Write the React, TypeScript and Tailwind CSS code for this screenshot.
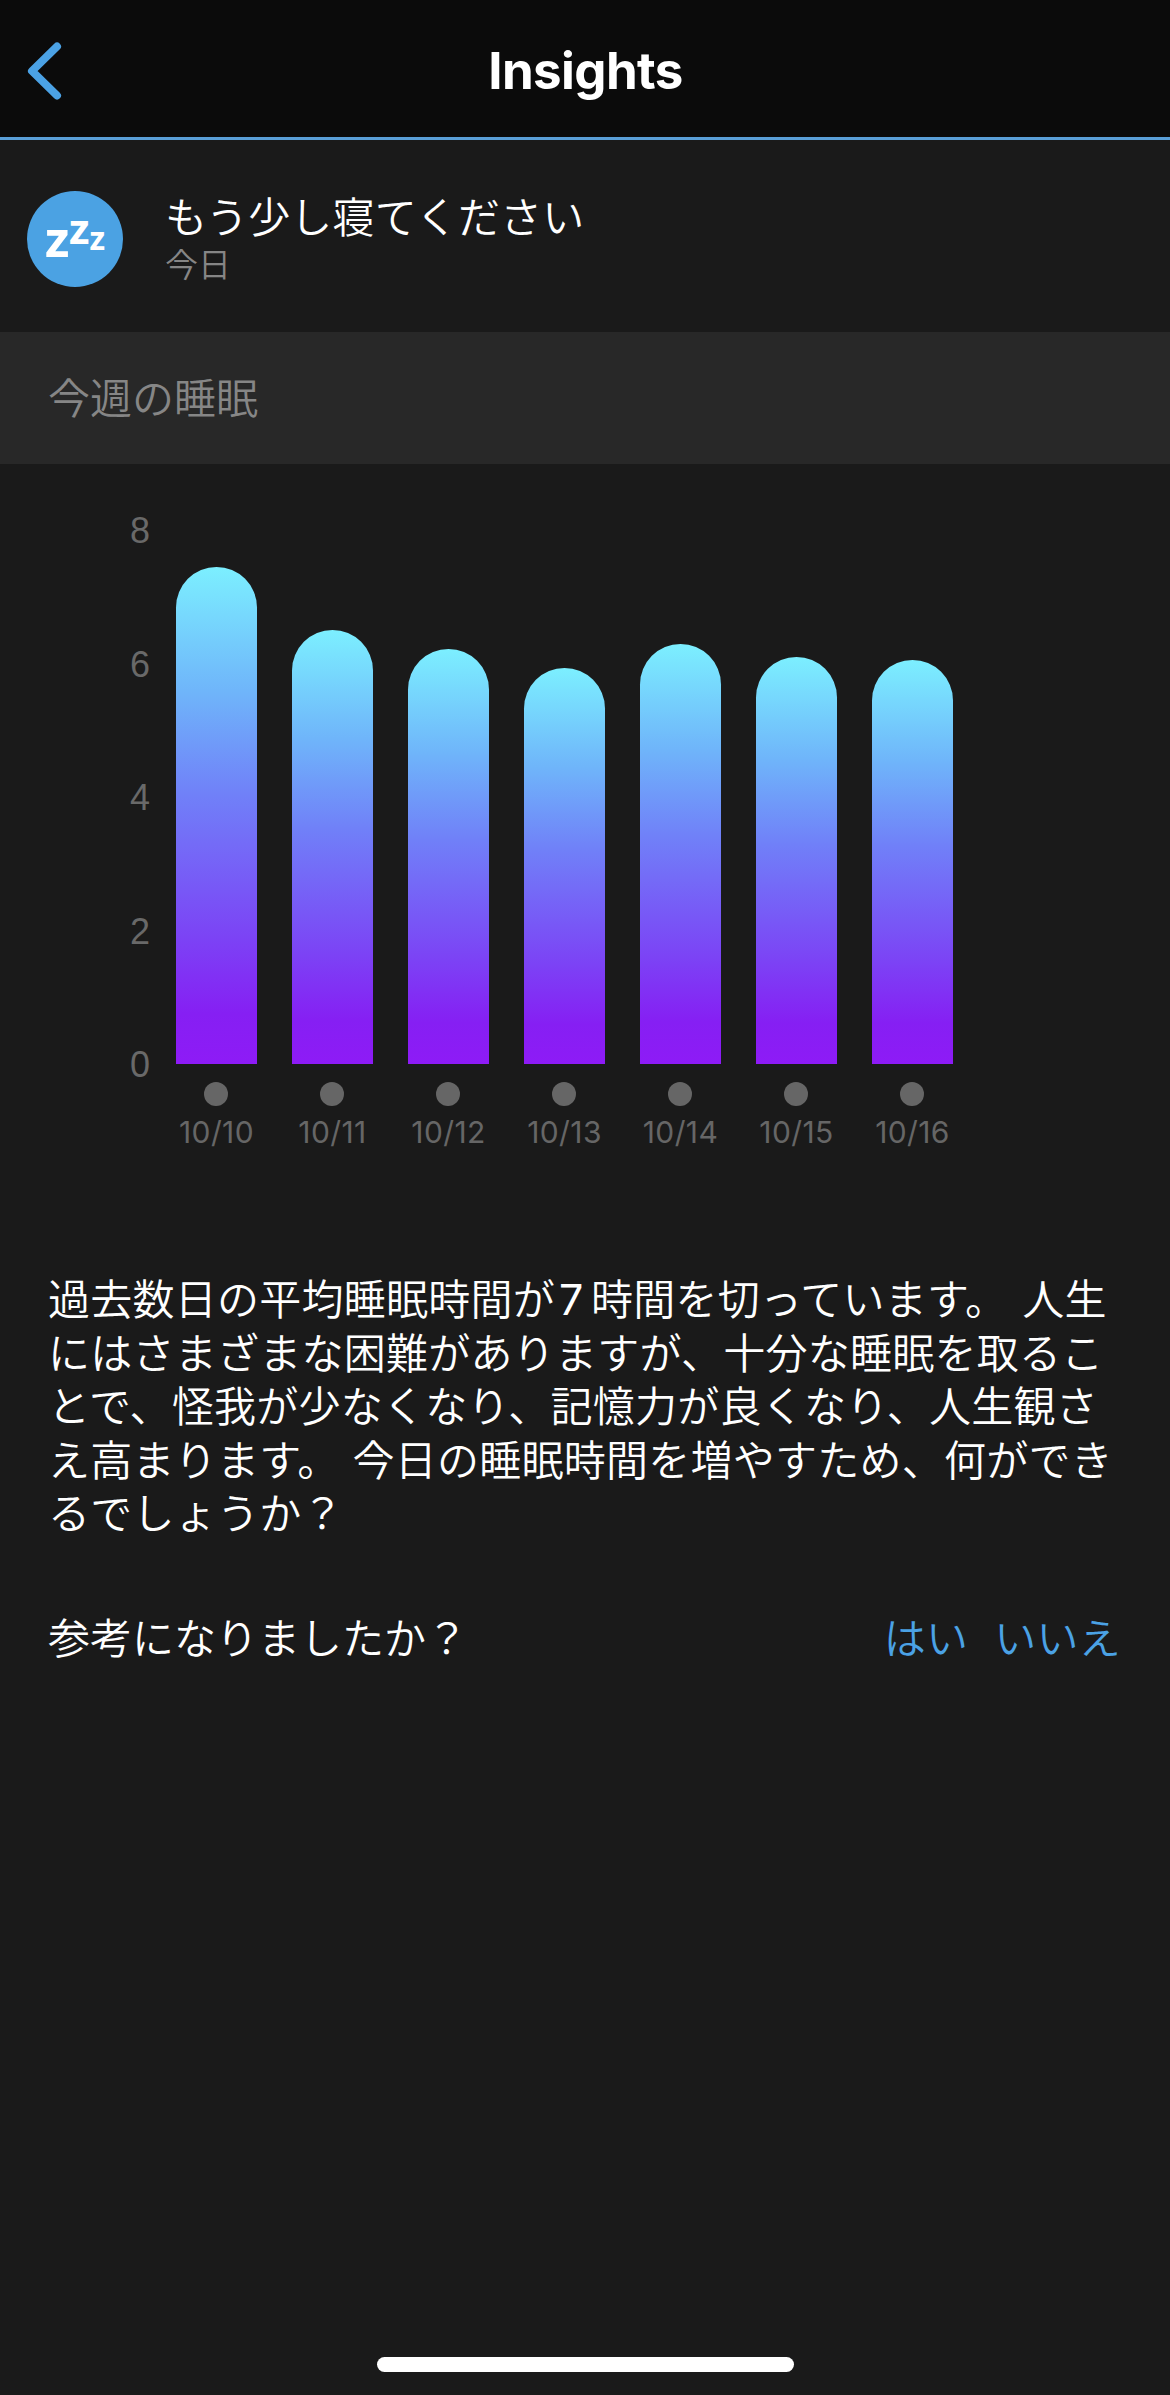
const days = [
  { label: "10/10", height: 497 },
  { label: "10/11", height: 434 },
  { label: "10/12", height: 415 },
  { label: "10/13", height: 396 },
  { label: "10/14", height: 420 },
  { label: "10/15", height: 407 },
  { label: "10/16", height: 404 },
];

function Header() {
  return (
    <header className="relative flex h-[140px] items-center justify-center border-b-[3px] border-[#5a9fd8] bg-[#0b0b0b] pt-[5px]">
      <button aria-label="Back" className="absolute left-[24px] top-[38px]">
        <svg width="42" height="66" viewBox="0 0 42 66" fill="none">
          <path d="M33 8.500L8 33L33 57.500" stroke="#4ba2e5" strokeWidth="8" strokeLinecap="round" strokeLinejoin="round" />
        </svg>
      </button>
      <h1 className="pl-px text-[51px] leading-[60px] font-bold tracking-[-0.6px] text-white">Insights</h1>
    </header>
  );
}

function SleepIcon() {
  return (
    <svg width="96" height="96" viewBox="0 0 96 96" className="shrink-0">
      <circle cx="48" cy="48" r="48" fill="#4ba2e3" />
      <g fill="#fff" fontFamily="Open Sans" fontWeight="700">
        <text x="18" y="66" fontSize="50">z</text>
        <text x="42" y="53" fontSize="42">z</text>
        <text x="62.500" y="58.500" fontSize="32">z</text>
      </g>
    </svg>
  );
}

function Chart() {
  return (
    <section className="flex h-[781px] pt-[47px]">
      <div className="-mt-px flex w-[150px] flex-col text-right font-['Liberation_Sans',sans-serif] text-[36px] text-[#696969]">
        {[8, 6, 4, 2, 0].map((n) => (
          <span key={n} className="h-[133.500px] leading-[41px]">{n}</span>
        ))}
      </div>
      <div className="ml-[26px] flex gap-[35px]">
        {days.map((d) => (
          <div key={d.label} className="flex w-[81px] flex-col items-center">
            <div className="flex h-[553px] w-full items-end">
              <div
                className="w-full rounded-t-full bg-[linear-gradient(to_bottom,#7cefff_0%,#6fb5fa_25%,#7080f8_46%,#7c42f5_75%,#861ff3_90%,#8e1bf6_100%)]"
                style={{ height: d.height }}
              />
            </div>
            <div className="mt-[18px] mr-px size-[24px] rounded-full bg-[#666]" />
            <span className="mt-[8px] text-[30px] leading-[37px] tracking-[0.4px] whitespace-nowrap text-[#666]">{d.label}</span>
          </div>
        ))}
      </div>
    </section>
  );
}

export default function App() {
  return (
    <main lang="ja" className="flex h-[2395px] w-[1170px] flex-col bg-[#1a1a1a] font-['Inter','Noto_Sans_CJK_JP',sans-serif] text-white">
      <Header />
      <section className="flex h-[192px] items-center gap-[42px] pt-[6px] pl-[27px]">
        <SleepIcon />
        <div className="flex flex-col font-['Noto_Sans_CJK_JP',sans-serif] font-[350]">
          <span className="text-[42px] leading-[48px] tracking-[0.2px]">もう少し寝てください</span>
          <span className="text-[33px] leading-[48px] text-[#868686]">今日</span>
        </div>
      </section>
      <h2 className="flex h-[132px] items-center bg-[#282828] pb-[6px] pl-[48px] font-['Noto_Sans_CJK_JP',sans-serif] text-[42px] font-[350] text-[#868686]">
        今週の睡眠
      </h2>
      <Chart />
      <div className="px-[48px] font-['Noto_Sans_CJK_JP',sans-serif] text-[42px] leading-[53.600px] font-[350] tracking-[0.25px]">
        <p className="mt-[25px] whitespace-nowrap">
          過去数日の平均睡眠時間が<span className="inline-block w-[36px] pl-[4px] font-['Inter'] text-[43px] leading-none font-normal">7</span>時間を切っています。<span className="pl-[15px]">人生</span><br />
          にはさまざまな困難がありますが、十分な睡眠を取るこ<br />
          とで、怪我が少なくなり、記憶力が良くなり、人生観さ<br />
          え高まります。<span className="pl-[13px]">今日の睡眠時間を増やすため、何ができ</span><br />
          るでしょうか？
        </p>
        <div className="mt-[71px] flex justify-between">
          <span className="tracking-normal">参考になりましたか？</span>
          <div className="flex gap-[26px] pr-[1px] text-[#4ba2e5]">
            <button>はい</button>
            <button>いいえ</button>
          </div>
        </div>
      </div>
      <div className="mx-auto mt-auto mb-[23px] h-[15px] w-[417px] rounded-full bg-white" />
    </main>
  );
}
